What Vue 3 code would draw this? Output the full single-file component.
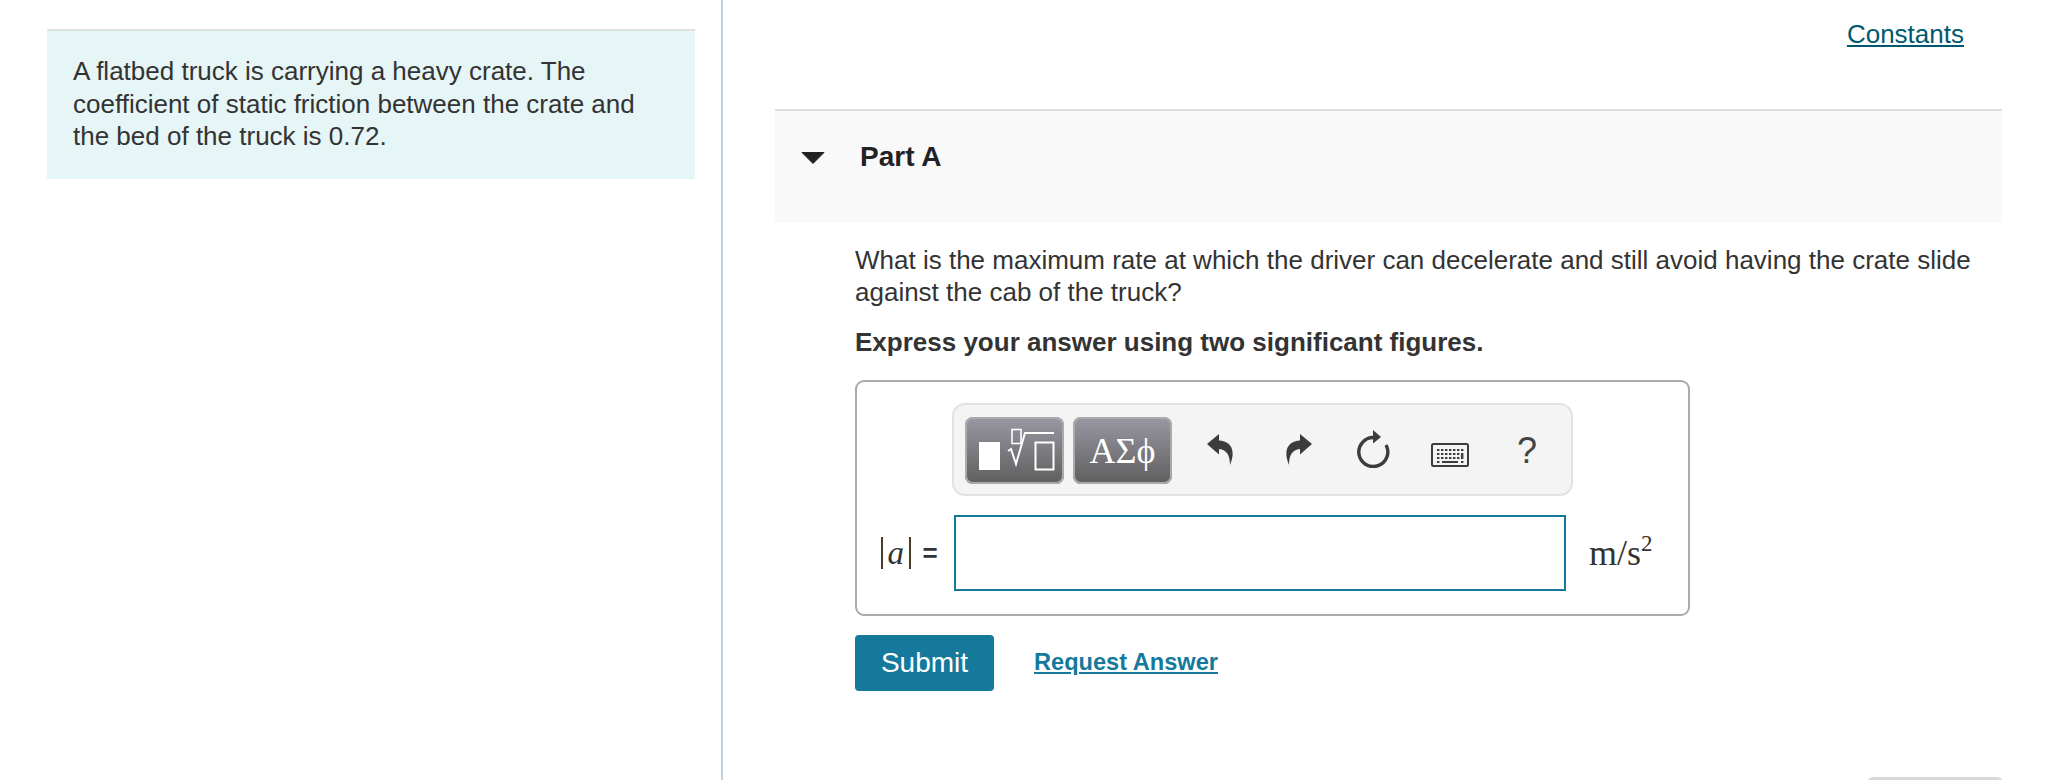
<script setup>
const keyRows = [
  { y: 6, xs: [6, 10, 14, 18, 22, 26, 30] },
  { y: 10, xs: [6, 10, 14, 18, 22, 26] },
  { y: 14, xs: [6, 10, 14, 18, 22, 26] }
]
</script>

<template>
  <div class="page">
    <aside class="left">
      <div class="intro">
        A flatbed truck is carrying a heavy crate. The coefficient of static friction between the crate and the bed of the truck is 0.72.
      </div>
    </aside>
    <main class="right">
      <div class="constants-row"><a class="constants">Constants</a></div>
      <section class="part-head">
        <svg class="caret" viewBox="0 0 24 12" width="24" height="12"><path d="M1 0.5H23L12 11.5Z" fill="#222" stroke="#222" stroke-linejoin="round"/></svg>
        <h2>Part A</h2>
      </section>
      <div class="content">
        <p class="question">What is the maximum rate at which the driver can decelerate and still avoid having the crate slide against the cab of the truck?</p>
        <p class="hint">Express your answer using two significant figures.</p>
        <div class="answer-box">
          <div class="toolbar">
            <button class="tpl">
              <svg viewBox="0 0 99 67" width="99" height="67">
                <rect x="14" y="25" width="21" height="28" fill="#fff"/>
                <rect x="47" y="12.5" width="9" height="14" fill="none" stroke="#fff" stroke-width="1.6"/>
                <path d="M43 34 L46 32 L51 47 L60 16 H89" fill="none" stroke="#fff" stroke-width="2"/>
                <rect x="70.5" y="25.5" width="18" height="27" fill="none" stroke="#fff" stroke-width="2"/>
              </svg>
            </button>
            <button class="tpl greek">ΑΣϕ</button>
            <div class="tools">
              <svg class="tool" viewBox="0 0 27 32" width="27" height="32"><path d="M0 10 L12 0 V6.5 C22 7 30 14 23 31 C23 22 20 15.5 12 15 V20.5 Z" fill="#3c3c3c"/></svg>
              <svg class="tool" viewBox="0 0 27 32" width="27" height="32"><path d="M27 10 L15 0 V6.5 C5 7 -3 14 4 31 C4 22 7 15.5 15 15 V20.5 Z" fill="#3c3c3c"/></svg>
              <svg class="tool" viewBox="0 0 34 38" width="34" height="38">
                <path d="M16.5 7.5 A14.5 14.5 0 1 0 29 15" fill="none" stroke="#3c3c3c" stroke-width="3.4"/>
                <path d="M16 0 L24 7 L16 13.5 Z" fill="#3c3c3c"/>
              </svg>
              <svg class="tool" viewBox="0 0 38 24" width="38" height="24">
                <rect x="1" y="1" width="36" height="22" rx="1.5" fill="none" stroke="#3c3c3c" stroke-width="2"/>
                <g fill="#3c3c3c">
                  <template v-for="row in keyRows" :key="row.y">
                    <rect v-for="x in row.xs" :key="x" :x="x" :y="row.y" width="2.4" height="2"/>
                  </template>
                  <rect x="30" y="10" width="2.4" height="6"/>
                  <rect x="6" y="18" width="2.4" height="2"/>
                  <rect x="11" y="18" width="16" height="2"/>
                  <rect x="30" y="18" width="2.4" height="2"/>
                </g>
              </svg>
              <span class="help">?</span>
            </div>
          </div>
          <div class="answer-row">
            <div class="label"><i class="bar"></i><em>a</em><i class="bar"></i><span class="eq">=</span></div>
            <input class="field" type="text" aria-label="answer" />
            <div class="units">m/s<sup>2</sup></div>
          </div>
        </div>
        <div class="actions">
          <button class="submit">Submit</button>
          <a class="request">Request Answer</a>
        </div>
      </div>
      <div class="next-tab"></div>
    </main>
  </div>
</template>

<style>
html, body { margin: 0; background: #fff; }
</style>

<style scoped>
.page {
  display: flex;
  width: 2068px;
  height: 780px;
  overflow: hidden;
  font-family: "Liberation Sans", Arial, sans-serif;
  font-size: 26px;
  line-height: 32.5px;
  color: #333;
}
.left {
  box-sizing: border-box;
  width: 723px;
  flex: none;
  padding: 29px 26px 0 47px;
  border-right: 2px solid #c0d0e0;
}
.intro {
  box-sizing: border-box;
  height: 150px;
  padding: 24px 26px 0;
  background: #e6f5f6;
  border-top: 2px solid #e0e0e0;
}
.right {
  flex: none;
  width: 1345px;
  box-sizing: border-box;
  padding: 18px 66px 0 52px;
}
.constants-row {
  display: flex;
  justify-content: flex-end;
  height: 91px;
  padding-right: 38px;
}
.constants {
  color: #005a6e;
  text-decoration: underline;
}
.part-head {
  box-sizing: border-box;
  height: 114px;
  display: flex;
  align-items: flex-start;
  background: #f9f9f9;
  border-top: 2px solid #dedede;
  padding: 29px 0 0 26px;
}
.caret { margin: 12px 0 0 0; flex: none; }
.part-head h2 {
  margin: 0 0 0 35px;
  font-size: 28px;
  line-height: 34px;
  font-weight: 700;
  color: #222;
}
.content {
  padding: 21px 0 0 80px;
}
.question {
  width: 1125px;
  margin: 0;
  line-height: 32px;
}
.hint {
  margin: 18px 0 0;
  font-weight: 700;
}
.answer-box {
  box-sizing: border-box;
  width: 835px;
  height: 236px;
  margin-top: 21.5px;
  padding: 21px 0 0 95px;
  border: 2px solid #aaa;
  border-radius: 9px;
  position: relative;
}
.toolbar {
  box-sizing: border-box;
  width: 621px;
  height: 93px;
  display: flex;
  align-items: flex-start;
  padding: 12px 0 0 11px;
  gap: 9px;
  background: #f4f4f4;
  border: 2px solid #e2e2e2;
  border-radius: 13px;
}
.tpl {
  width: 99px;
  height: 67px;
  flex: none;
  padding: 0;
  border: 0;
  border-radius: 8px;
  box-shadow: inset 0 0 0 2px #aaa;
  background: linear-gradient(#9a98a3, #5e5e5e);
  color: #fff;
  display: flex;
  align-items: center;
  justify-content: center;
}
.tpl svg { display: block; }
.greek {
  font-family: "Liberation Serif", "DejaVu Serif", serif;
  font-size: 36px;
  line-height: 1;
}
.tools {
  position: relative;
  flex: 1;
  height: 67px;
}
.tool, .help { position: absolute; }
.tool:nth-child(1) { left: 26px; top: 17px; }
.tool:nth-child(2) { left: 104px; top: 17px; }
.tool:nth-child(3) { left: 176px; top: 13px; }
.tool:nth-child(4) { left: 250px; top: 26px; }
.help {
  left: 336px;
  top: 14px;
  font-size: 36px;
  line-height: 40px;
  color: #444;
}
.answer-row {
  position: absolute;
  left: 24px;
  top: 133px;
  display: flex;
  align-items: center;
}
.label {
  width: 73px;
  height: 76px;
  display: flex;
  align-items: center;
  font-family: "Liberation Serif", serif;
  font-size: 33px;
}
.bar {
  width: 1.5px;
  height: 32px;
  background: #4a3a28;
}
.label em { margin: 0 5px; }
.eq {
  margin-left: 12px;
  font-family: "Liberation Sans", sans-serif;
  font-size: 26px;
  font-weight: 700;
}
.field {
  box-sizing: border-box;
  width: 612px;
  height: 76px;
  padding: 0;
  border: 2px solid #14799b;
  background: #fff;
  outline: 0;
}
.units {
  margin-left: 23px;
  font-family: "Liberation Serif", serif;
  font-size: 36px;
}
.units sup {
  font-size: 23px;
  line-height: 0;
  vertical-align: 14px;
}
.actions {
  display: flex;
  align-items: center;
  gap: 40px;
  margin-top: 19px;
}
.submit {
  box-sizing: border-box;
  width: 139px;
  height: 56px;
  border: 0;
  border-radius: 4px;
  background: #14799b;
  color: #fff;
  font-family: "Liberation Sans", Arial, sans-serif;
  font-size: 28px;
}
.request {
  margin-top: -2px;
  font-size: 23.6px;
  font-weight: 700;
  color: #14799b;
  text-decoration: underline;
}
.next-tab {
  width: 136px;
  height: 40px;
  margin: 86px 0 0 1092px;
  background: #d8d8d8;
  border-radius: 6px 6px 0 0;
}
</style>
